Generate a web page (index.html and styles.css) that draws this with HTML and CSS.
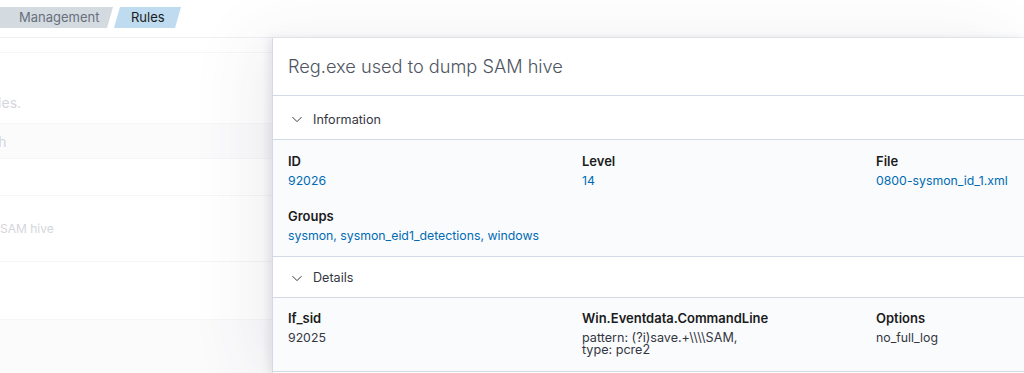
FILE: index.html
```html
<!DOCTYPE html>
<html>
<head>
<meta charset="utf-8">
<link rel="stylesheet" href="styles.css">
</head>
<body>
<div class="page">
  <header class="topbar">
    <nav class="crumbs">
      <span class="crumb crumb-first">Management</span>
      <span class="crumb crumb-last">Rules</span>
    </nav>
  </header>
  <main class="list">
    <div class="row r-top"></div>
    <div class="row r-desc"><span class="faded shift">Here you can manage your rules.</span></div>
    <div class="row r-search gray"><span class="faded shift2">Search</span></div>
    <div class="row r-head"></div>
    <div class="row r-item"><span class="faded small shift3">Reg.exe used to dump SAM hive</span></div>
    <div class="row r-empty"></div>
    <div class="row r-foot gray"></div>
  </main>

  <aside class="flyout">
    <div class="fly-head">
      <h2 class="fly-title">Reg.exe used to dump SAM hive</h2>
    </div>

    <div class="acc-btn first">
      <svg class="chev" width="12" height="12" viewBox="0 0 16 16"><path d="M2 5.5 L8 11.5 L14 5.5" fill="none" stroke="#343741" stroke-width="1.3"/></svg>
      <span>Information</span>
    </div>
    <div class="acc-body info">
      <div class="field"><div class="label">ID</div><div class="val link">92026</div></div>
      <div class="field"><div class="label">Level</div><div class="val link">14</div></div>
      <div class="field"><div class="label">File</div><div class="val link">0800-sysmon_id_1.xml</div></div>
      <div class="field wide"><div class="label">Groups</div><div class="val link">sysmon, sysmon_eid1_detections, windows</div></div>
    </div>

    <div class="acc-btn second">
      <svg class="chev" width="12" height="12" viewBox="0 0 16 16"><path d="M2 5.5 L8 11.5 L14 5.5" fill="none" stroke="#343741" stroke-width="1.3"/></svg>
      <span>Details</span>
    </div>
    <div class="acc-body details">
      <div class="field"><div class="label">If_sid</div><div class="val">92025</div></div>
      <div class="field"><div class="label">Win.Eventdata.CommandLine</div><div class="val tight">pattern: (?i)save.+\\\\SAM,<br>type: pcre2</div></div>
      <div class="field"><div class="label">Options</div><div class="val">no_full_log</div></div>
    </div>
  </aside>
</div>
</body>
</html>
```

FILE: styles.css
```css
* { box-sizing: border-box; }
html, body { margin: 0; padding: 0; }
body {
  width: 1024px;
  height: 373px;
  overflow: hidden;
  background: #ffffff;
  font-family: Inter, "Noto Sans", sans-serif;
  color: #343741;
}
.page {
  position: relative;
  width: 1024px;
  height: 373px;
  overflow: hidden;
}
.topbar {
  height: 38px;
  border-bottom: 1px solid #eef0f4;
  display: flex;
  align-items: flex-start;
  padding-top: 7px;
}
.crumbs { display: flex; }
.crumb {
  height: 21px;
  line-height: 21px;
  font-size: 13px;
  display: inline-block;
}
.crumb-first {
  background: #d3dae0;
  color: #69707d;
  padding: 0 22px 0 19px;
  width: 113px;
  clip-path: polygon(0 0, 100% 0, calc(100% - 6px) 100%, 0 100%);
}
.crumb-last {
  background: #bfdbef;
  color: #1a1c21;
  margin-left: 1px;
  width: 67px;
  padding-left: 17px;
  clip-path: polygon(6px 0, 100% 0, calc(100% - 6px) 100%, 0 100%);
}
.list {
  display: flex;
  flex-direction: column;
}
.row {
  border-bottom: 1px solid #f5f6f8;
  display: flex;
  align-items: flex-end;
  overflow: hidden;
  white-space: nowrap;
}
.gray { background: #fbfbfc; }
.r-top { height: 15px; }
.r-desc { height: 71px; padding-bottom: 12px; }
.r-search { height: 35px; align-items: center; }
.r-head { height: 37px; }
.r-item { height: 66px; align-items: center; }
.r-empty { height: 58px; }
.r-foot { height: 60px; border-bottom: none; }
.faded { color: #d4d6db; font-size: 14px; }
.faded.small { font-size: 12px; }
.shift { margin-left: -198px; }
.shift2 { margin-left: -40px; }
.shift3 { margin-left: -130px; }

.flyout {
  position: absolute;
  top: 38px;
  left: 272px;
  right: 0;
  bottom: 0;
  background: #ffffff;
  border-left: 1px solid #d3dae6;
  box-shadow: -4px 0 8px rgba(60, 70, 90, 0.10), -20px 0 60px rgba(60, 70, 90, 0.08);
}
.fly-head {
  height: 58px;
  border-bottom: 1px solid #d3dae6;
  display: flex;
  align-items: center;
  padding-left: 15px;
  padding-bottom: 2px;
}
.fly-title {
  margin: 0;
  font-size: 18.2px;
  font-weight: 300;
  color: #4f5562;
}
.acc-btn {
  display: flex;
  align-items: center;
  padding-left: 18px;
  gap: 10px;
  font-size: 12.6px;
  color: #343741;
  border-bottom: 1px solid #d3dae6;
}
.acc-btn.first { height: 44px; padding-top: 3px; }
.acc-btn.second { height: 41px; padding-top: 1px; }
.chev { display: block; }
.acc-body {
  background: #fafbfd;
  border-bottom: 1px solid #d3dae6;
  display: grid;
  grid-template-columns: 294px 294px 294px;
  padding-left: 15px;
}
.info {
  padding-top: 11px;
  padding-bottom: 10px;
  row-gap: 15px;
}
.details {
  padding-top: 10px;
  padding-bottom: 15px;
}
.field.wide { grid-column: 1 / span 3; }
.label {
  font-size: 13px;
  font-weight: 600;
  color: #1a1c21;
  line-height: 20px;
}
.val {
  font-size: 12.3px;
  line-height: 20px;
  color: #343741;
  white-space: nowrap;
}
.val.link { color: #006bb4; }
.val.tight {
  font-size: 12.6px;
  line-height: 12px;
  padding-top: 4px;
}
```
